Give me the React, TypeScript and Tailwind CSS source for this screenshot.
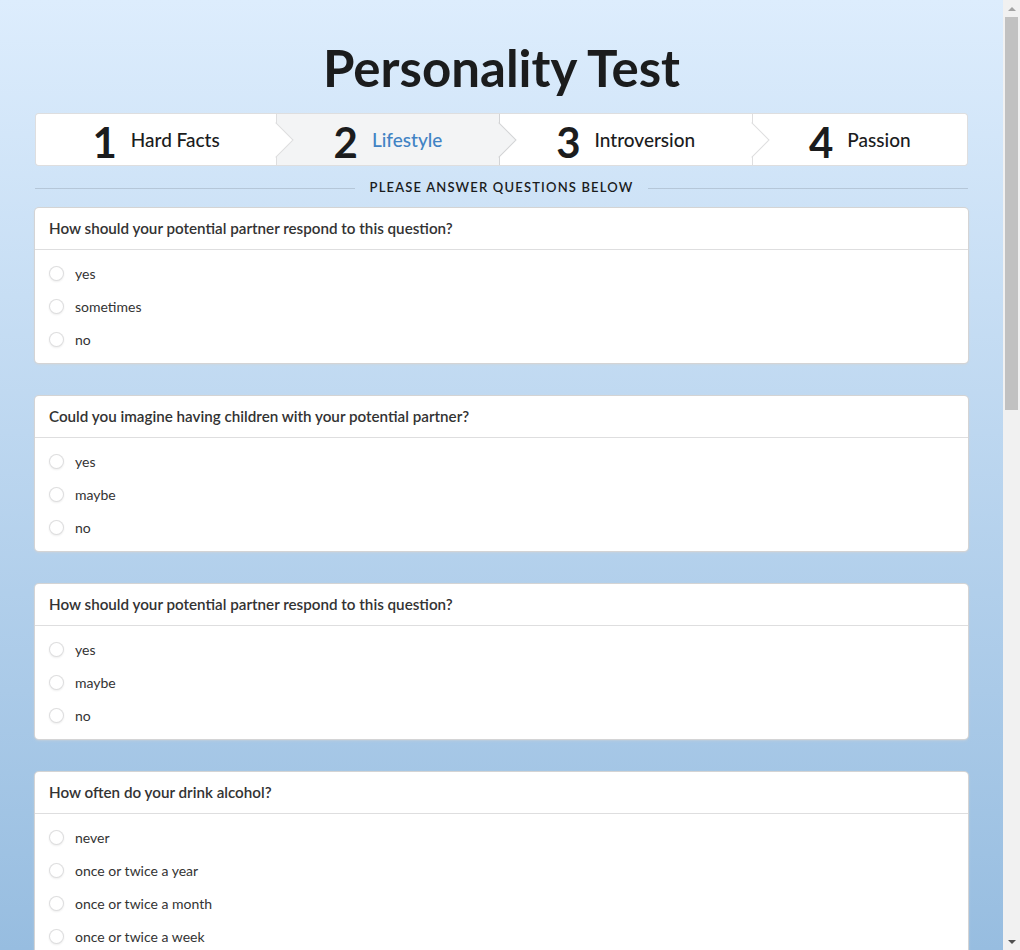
import React from "react";

type Question = { text: string; options: string[] };

const steps = [
  { n: "1", title: "Hard Facts" },
  { n: "2", title: "Lifestyle", active: true },
  { n: "3", title: "Introversion" },
  { n: "4", title: "Passion" },
];

const questions: Question[] = [
  { text: "How should your potential partner respond to this question?", options: ["yes", "sometimes", "no"] },
  { text: "Could you imagine having children with your potential partner?", options: ["yes", "maybe", "no"] },
  { text: "How should your potential partner respond to this question?", options: ["yes", "maybe", "no"] },
  {
    text: "How often do your drink alcohol?",
    options: ["never", "once or twice a year", "once or twice a month", "once or twice a week", "several times a week", "every day"],
  },
  { text: "How often do you smoke?", options: ["never", "sometimes", "often"] },
  { text: "Do you like to go out on weekends?", options: ["yes", "sometimes", "no"] },
  { text: "How important is religion in your life?", options: ["very important", "somewhat important", "not important"] },
  { text: "Do you enjoy travelling?", options: ["yes", "maybe", "no"] },
  { text: "Would you move to another city for your partner?", options: ["yes", "maybe", "no"] },
];

function Steps() {
  return (
    <div className="flex rounded-[4px] border border-[rgba(34,36,38,0.15)] bg-white">
      {steps.map((s, i) => {
        const bg = s.active ? "bg-[#f3f4f5]" : "bg-white";
        const last = i === steps.length - 1;
        return (
          <div
            key={s.n}
            className={`relative flex flex-auto items-center justify-center h-[51px] pt-[2px] ${bg} ${
              i === 0 ? "rounded-l-[4px]" : ""
            } ${last ? "rounded-r-[4px]" : "border-r border-[rgba(34,36,38,0.15)]"}`}
          >
            <span className="text-[42px] font-bold leading-none text-[#1b1c1d] mr-[14px] mt-[2px]">{s.n}</span>
            <span className={`text-[19px] font-medium ${s.active ? "text-[#4183c4]" : "text-[#1b1c1d]"}`}>{s.title}</span>
            {!last && (
              <span
                className={`absolute right-0 top-1/2 z-10 h-[25px] w-[25px] translate-x-1/2 -translate-y-1/2 rotate-45 border-t border-r border-[rgba(34,36,38,0.15)] ${bg}`}
              />
            )}
          </div>
        );
      })}
    </div>
  );
}

function QuestionCard({ q }: { q: Question }) {
  return (
    <div className="rounded-[4px] bg-white shadow-[0_1px_3px_0_#d4d4d5,0_0_0_1px_#d4d4d5]">
      <div className="px-[14px] h-[42px] flex items-center border-b border-[rgba(34,36,38,0.15)] text-[15.2px] font-semibold text-[#333]">
        {q.text}
      </div>
      <div className="px-[14px] pt-[7px] pb-[7px]">
        {q.options.map((o, i) => (
          <label key={i} className="flex items-center h-[33px] text-[14px] text-[#333] cursor-pointer">
            <span className="w-[15px] h-[15px] rounded-full border border-[rgba(34,36,38,0.15)] bg-white shadow-[0_1px_2px_rgba(34,36,38,0.08)] mr-[11px]" />
            {o}
          </label>
        ))}
      </div>
    </div>
  );
}

function Scrollbar() {
  return (
    <div className="w-[17px] h-full bg-[#f1f1f1] flex flex-col items-center">
      <div className="h-[17px] flex items-center justify-center">
        <span className="w-0 h-0 border-x-[4px] border-x-transparent border-b-[4px] border-b-[#a3a3a3]" />
      </div>
      <div className="w-[13px] h-[393px] bg-[#c1c1c1]" />
      <div className="flex-1" />
      <div className="h-[17px] flex items-center justify-center">
        <span className="w-0 h-0 border-x-[4px] border-x-transparent border-t-[4px] border-t-[#505050]" />
      </div>
    </div>
  );
}

export default function App() {
  return (
    <div className="h-screen flex overflow-hidden bg-gradient-to-b from-[#ddedfd] to-[#97bde0] font-[Lato,'Open_Sans',sans-serif] text-[#333]">
      <div className="flex-1 h-full overflow-hidden">
        <div className="mx-[35px] pt-[35px] pb-[40px]">
          <h1 className="text-center text-[51px] font-bold leading-[66px] text-[#1b1c1d] mb-[12px]">Personality Test</h1>

          <Steps />

          <div className="flex items-center mt-[13px] mb-[11px] h-[18px]">
            <div className="flex-1 h-px bg-[rgba(34,36,38,0.15)]" />
            <span className="mx-[15px] text-[13px] font-semibold uppercase tracking-[0.09em] text-[#1b1c1d]">
              Please answer questions below
            </span>
            <div className="flex-1 h-px bg-[rgba(34,36,38,0.15)]" />
          </div>

          <div className="flex flex-col gap-[33px]">
            {questions.map((q, i) => (
              <QuestionCard key={i} q={q} />
            ))}
          </div>
        </div>
      </div>
      <Scrollbar />
    </div>
  );
}
